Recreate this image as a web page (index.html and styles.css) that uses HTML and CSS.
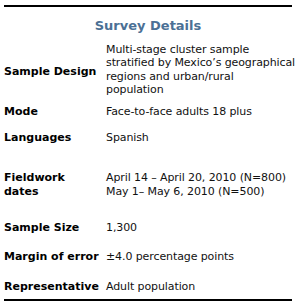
FILE: index.html
```html
<!DOCTYPE html>
<html lang="en">
<head>
<meta charset="utf-8">
<title>Survey Details</title>
<link rel="stylesheet" href="styles.css">
</head>
<body>
<div class="survey">
  <h2 class="survey-title">Survey Details</h2>
  <div class="row row-design">
    <div class="label">Sample Design</div>
    <div class="value">Multi-stage cluster sample<br>stratified by Mexico’s geographical<br>regions and urban/rural<br>population</div>
  </div>
  <div class="row row-mode">
    <div class="label">Mode</div>
    <div class="value">Face-to-face adults 18 plus</div>
  </div>
  <div class="row row-lang">
    <div class="label">Languages</div>
    <div class="value">Spanish</div>
  </div>
  <div class="row row-field">
    <div class="label">Fieldwork<br>dates</div>
    <div class="value">April 14 – April 20, 2010 (N=800)<br>May 1– May 6, 2010 (N=500)</div>
  </div>
  <div class="row row-size">
    <div class="label">Sample Size</div>
    <div class="value">1,300</div>
  </div>
  <div class="row row-margin">
    <div class="label">Margin of error</div>
    <div class="value">±4.0 percentage points</div>
  </div>
  <div class="row row-rep">
    <div class="label">Representative</div>
    <div class="value">Adult population</div>
  </div>
</div>
</body>
</html>
```
FILE: styles.css
```css
html, body {
  margin: 0;
  padding: 0;
  background: #ffffff;
}

.survey {
  margin: 5px 0 0 4px;
  width: 288px;
  border-top: 2px solid #000;
  border-bottom: 2px solid #000;
  font-family: "DejaVu Sans", sans-serif;
  font-size: 11px;
  line-height: 13.4px;
  color: #111;
  box-sizing: border-box;
  height: 296px;
}

.survey-title {
  margin: 11px 0 0 0;
  text-align: center;
  font-size: 13px;
  line-height: 16px;
  font-weight: bold;
  color: #4b7095;
}

.row {
  display: grid;
  grid-template-columns: 102px 1fr;
  align-items: center;
}

.label {
  font-weight: bold;
  color: #000;
  white-space: nowrap;
}

.value {
  white-space: nowrap;
  letter-spacing: -0.1px;
}

.row-design { margin-top: 9px; }
.row-design .label { padding-top: 4px; }
.row-mode { margin-top: 8px; }
.row-lang { margin-top: 13px; }
.row-field { margin-top: 27px; }
.row-size { margin-top: 23px; }
.row-margin { margin-top: 15px; }
.row-rep { margin-top: 17px; }
```
